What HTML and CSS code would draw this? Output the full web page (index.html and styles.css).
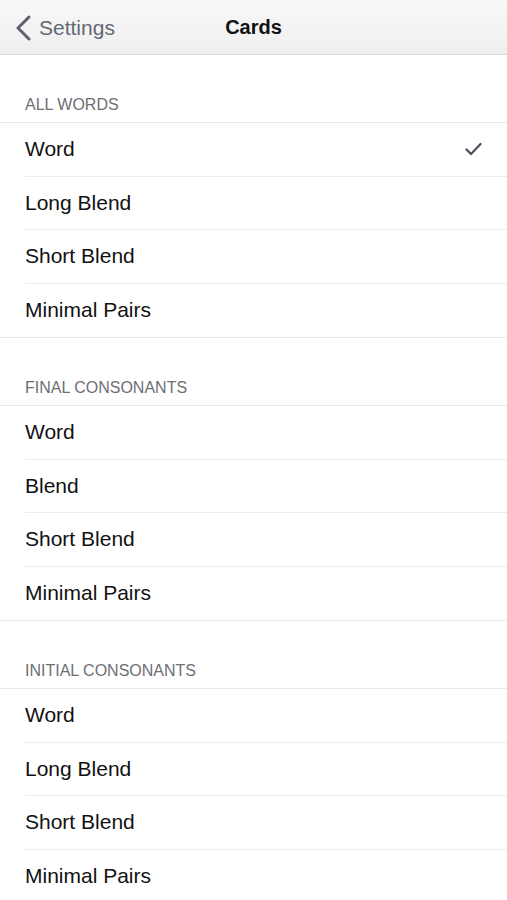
FILE: index.html
```html
<!DOCTYPE html>
<html lang="en">
<head>
  <meta charset="UTF-8">
  <meta name="viewport" content="width=device-width, initial-scale=1.0">
  <title>Cards</title>
  <link rel="stylesheet" href="styles.css">
</head>
<body>
  <div class="navbar">
    <a class="back" href="#">
      <svg class="chevron" width="17" height="26" viewBox="0 0 17 26">
        <path d="M14 2 L3 13 L14 24" fill="none" stroke="currentColor" stroke-width="3" stroke-linecap="round" stroke-linejoin="round"/>
      </svg>
      <span>Settings</span>
    </a>
    <div class="title">Cards</div>
  </div>

  <div class="section-header">ALL WORDS</div>
  <ul class="group">
    <li class="row">Word
      <svg class="check" width="17" height="14" viewBox="0 0 17 14">
        <path d="M1.5 7.5 L6 12 L15.5 2" fill="none" stroke="currentColor" stroke-width="2.2" stroke-linecap="round" stroke-linejoin="round"/>
      </svg>
    </li>
    <li class="row">Long Blend</li>
    <li class="row">Short Blend</li>
    <li class="row">Minimal Pairs</li>
  </ul>

  <div class="section-header">FINAL CONSONANTS</div>
  <ul class="group">
    <li class="row">Word</li>
    <li class="row">Blend</li>
    <li class="row">Short Blend</li>
    <li class="row">Minimal Pairs</li>
  </ul>

  <div class="section-header">INITIAL CONSONANTS</div>
  <ul class="group">
    <li class="row">Word</li>
    <li class="row">Long Blend</li>
    <li class="row">Short Blend</li>
    <li class="row">Minimal Pairs</li>
  </ul>
</body>
</html>
```

FILE: styles.css
```css
* {
  margin: 0;
  padding: 0;
  box-sizing: border-box;
  font-family: 'Liberation Sans', Arial, sans-serif;
}
body {
  background: white;
  width: 507px;
  overflow: hidden;
}
.navbar {
  height: 55px;
  background: linear-gradient(#f8f8f8, #efefef);
  border-bottom: 1px solid #d9d9d9;
  display: flex;
  align-items: center;
  justify-content: center;
  position: relative;
}
.back {
  position: absolute;
  left: 15px;
  top: 15px;
  display: flex;
  align-items: center;
  gap: 7px;
  color: #646874;
  text-decoration: none;
  font-size: 21px;
}
.chevron {
  color: #5d616d;
}
.title {
  font-size: 20px;
  font-weight: bold;
  color: #111;
  margin-top: 1px;
}
.section-header {
  padding: 40px 25px 8px;
  font-size: 16px;
  color: #6e6e73;
  line-height: 19px;
}
.group {
  list-style: none;
  border-top: 1px solid #e8e8e8;
  border-bottom: 1px solid #e8e8e8;
}
.row {
  height: 53.5px;
  margin-left: 25px;
  padding-right: 25px;
  display: flex;
  align-items: center;
  justify-content: space-between;
  font-size: 21px;
  color: #111;
  border-bottom: 1px solid #ececec;
}
.row:last-child {
  border-bottom: none;
}
.check {
  color: #4b505c;
}
```
